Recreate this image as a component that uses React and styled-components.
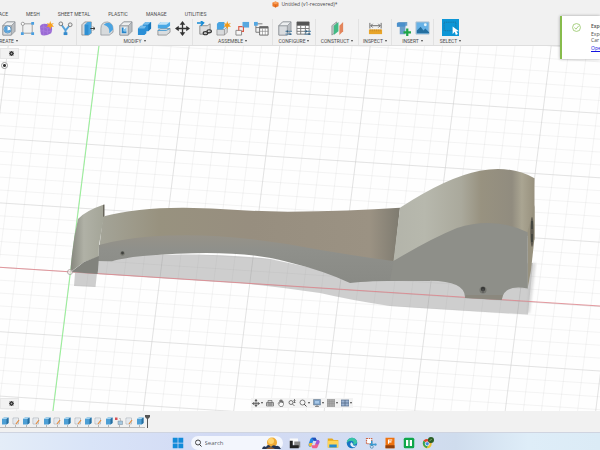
import React from 'react';
import styled, { createGlobalStyle } from 'styled-components';

const GlobalStyle = createGlobalStyle`
  * { box-sizing: border-box; }
  html, body, #root { height: 100%; margin: 0; }
  body { overflow: hidden; font-family: Roboto, "Liberation Sans", sans-serif; font-size: 5px; line-height: 6px; color: #4c4c4c; }
  button, input { font: inherit; color: inherit; }
  svg { display: block; }
`;

const Screen = styled.div`
  position: relative;
  display: flex;
  flex-direction: column;
  height: 100vh;
  background: #f1f1f1;
  overflow: hidden;
`;
const TitleBar = styled.header`
  display: flex;
  justify-content: center;
  align-items: center;
  gap: 2px;
  height: 8px;
  flex: none;
  padding-left: 10px;
  font-size: 5px;
  svg { width: 7px; height: 7px; }
`;
const Title = styled.h1`
  margin: 0;
  font: 5px/7px "Open Sans", sans-serif;
  color: #444;
`;
const PlainButton = styled.button`
  display: flex;
  align-items: center;
  justify-content: center;
  padding: 0;
  border: 0;
  background: none;
  white-space: nowrap;
`;
const Tabs = styled.nav`
  display: flex;
  gap: 18px;
  height: 11px;
  flex: none;
  margin-left: -13px;
`;
const Ribbon = styled.div`
  display: flex;
  height: 27px;
  flex: none;
  margin-left: -62px;
  border-bottom: 1px solid #dedede;
`;
const Group = styled.section`
  flex: none;
  width: ${p => p.$width}px;
  padding: 0 3px;
  & + & { border-left: 1px solid #e2e2e2; }
`;
const Tools = styled.div`
  display: flex;
  justify-content: ${p => (p.$end ? 'flex-end' : 'center')};
  gap: 4px;
  height: 18px;
`;
const Tool = styled(PlainButton)`
  width: ${p => (p.$active ? 17 : 15)}px;
  height: ${p => (p.$active ? 17 : 18)}px;
  background: ${p => (p.$active ? '#0d96d6' : 'none')};
  svg { width: ${p => (p.$active ? 17 : 15)}px; height: ${p => (p.$active ? 17 : 15)}px; }
`;
const GroupLabel = styled(PlainButton)`
  width: 100%;
  height: 7px;
  gap: 2px;
`;
const Caret = styled.i`
  border: 1px solid transparent;
  border-top: 2px solid #444;
  border-bottom: 0;
`;
const Viewport = styled.main`
  position: relative;
  flex: 1;
  min-height: 0;
  background: #fefefe;
  overflow: hidden;
`;
const Scene = styled.svg`
  width: 100%;
  height: 100%;
`;
const SidePanel = styled.div`
  position: absolute;
  left: 0;
  ${p => (p.$bottom ? 'bottom: 2px;' : 'top: 2px;')}
  display: flex;
  align-items: center;
  justify-content: flex-end;
  width: 19px;
  height: 11px;
  padding-right: 4px;
  background: #f2f2f2;
  border: 1px solid #e7e7e7;
  svg { width: 5px; height: 5px; }
`;
const RootNode = styled.label`
  position: absolute;
  top: 16px;
  left: 1px;
  display: flex;
`;
const Radio = styled.input`
  appearance: none;
  width: 7px;
  height: 7px;
  margin: 0;
  border: 1px solid #9a9a9a;
  border-radius: 50%;
  background: radial-gradient(#333 0 1px, #fff 2px);
`;
const NavBar = styled.div`
  position: absolute;
  bottom: 3px;
  left: 0;
  right: 0;
  display: flex;
  justify-content: center;
  padding-left: 4px;
`;
const NavTools = styled.div`
  display: flex;
  align-items: center;
  gap: 3px;
  height: 10px;
  padding: 0 1px;
  background: #f3f3f3;
`;
const NavTool = styled(PlainButton)`
  gap: 1px;
  height: 10px;
  svg { width: 8px; height: 8px; }
`;
const Timeline = styled.footer`
  display: flex;
  flex: none;
  height: 21px;
  padding-top: 4px;
`;
const Track = styled.div`
  display: flex;
  height: 13px;
  border-bottom: 1px solid #b8b8b8;
`;
const Feature = styled(PlainButton)`
  position: relative;
  width: ${p => (p.$wide ? 11 : 10)}px;
  height: 12px;
  svg { width: 8px; height: 8px; }
  &::after { content: ''; position: absolute; bottom: 0; left: 5px; width: 1px; height: 2px; background: #b8b8b8; }
`;
const Marker = styled.svg`
  width: 6px;
  height: 13px;
`;
const Taskbar = styled.nav`
  display: flex;
  align-items: center;
  justify-content: center;
  gap: 6px;
  flex: none;
  height: 18px;
  padding-top: 3px;
  padding-left: 6px;
  border-top: 1px solid #cfd4e0;
  background: linear-gradient(90deg, #e4edf8 0, #d9e4f8 15%, #d2daf4 35%, #d3ddf2 65%, #cfdced 76%, #deedf8 88%, #dbebf6);
`;
const SearchBox = styled.label`
  display: flex;
  align-items: center;
  gap: 3px;
  width: 92px;
  height: 14px;
  padding: 0 2px 0 4px;
  border-radius: 7px;
  background: #f3f6fd;
  svg { flex: none; }
`;
const SearchInput = styled.input`
  flex: 1;
  min-width: 0;
  padding: 0;
  border: 0;
  background: none;
  outline: none;
  font: 6px/8px "Open Sans", sans-serif;
  &::placeholder { color: #5b5f68; opacity: 1; }
`;
const AppButton = styled(PlainButton)`
  width: 13px;
  height: 14px;
  svg { width: 12px; height: 12px; }
`;
const Toast = styled.aside`
  position: absolute;
  top: 16px;
  right: 0;
  display: flex;
  gap: 10px;
  width: 40px;
  height: 43px;
  padding: 7px 0 0 10px;
  border-left: 2px solid #87bc4c;
  background: #fff;
  box-shadow: 0 0 3px #0005;
  overflow: hidden;
  white-space: nowrap;
  svg { flex: none; width: 9px; height: 9px; }
`;
const ToastText = styled.div`
  font: 5px/6px "Open Sans", sans-serif;
  strong, a, p { display: block; margin: 0; font-weight: 400; }
  strong { margin-bottom: 2px; font-weight: 600; }
  a { margin-top: 2px; color: #1414e0; }
`;

const Icon = ({ children, box = 16 }) => <svg viewBox={`0 0 ${box} ${box}`} aria-hidden="true">{children}</svg>;

const Shell = ({ front = '#d9dcdf' }) => (
  <g stroke="#858a8f" strokeWidth=".7">
    <path d="M2 5 6 1H15V11L11 15H2Z" fill="#b9bdc1" />
    <path d="M2 5H11V15H2Z" fill={front} />
    <path d="M2 5 6 1H15L11 5Z" fill="#eceeef" />
  </g>
);

const icons = {
  hole: <Icon><Shell /><circle cx="7" cy="9" r="3.8" fill="#fff" stroke="#5a8eb6" /><path d="M7 5.5A3.5 3.5 0 1 0 10.5 9L7 10Z" fill="#58a3dc" /></Icon>,
  sketch: <Icon><path d="M3 4V14M4 3H14M4 13H14M13 4V12" stroke="#9c9c9c" /><g fill="#4b9fe0"><path d="M12 1h3v3h-3zM12 12h3v3h-3zM1 12h3v3H1z" /></g><circle cx="3" cy="3" r="1.7" fill="#fff" stroke="#888" strokeWidth=".8" /></Icon>,
  form: <Icon><path d="M1 6Q2 3 6 3L13 4Q15 9 13 13L9 15Q3 16 2 14Z" fill="#9a6bd4" /><path d="M1 7Q6 5 9 8V15M9 8L14 6M1 11Q5 9 9 12L14 10M5 3V15" stroke="#b184e2" strokeWidth=".6" fill="none" /><path d="m12 0 1 3 3-1-2 2 2 2-3 0-1 3-1-3-3 0 2-2-2-2 3 1z" fill="#f8a11c" /></Icon>,
  branch: <Icon><path d="M3 3 8 10 13 4M8 10V14" stroke="#55a2da" strokeWidth="2" fill="none" /><g fill="#eee" stroke="#777"><circle cx="3" cy="3" r="2" /><circle cx="13" cy="4" r="2" /></g><path d="M6 12h4v3H6z" fill="#3489cb" /></Icon>,
  press: <Icon><path d="M2 4 5 1H12V13L9 15H2Z" fill="#d6d9dc" stroke="#777" strokeWidth=".7" /><path d="M5 4 8 1H12V13L9 15H5Z" fill="#48a4e1" /><path d="M5 4H9V15H5Z" fill="#2f8fd2" /><path d="M11 8h5m-2-2 2 2-2 2" stroke="#333" fill="none" /></Icon>,
  fillet: <Icon><path d="M2 15V8Q2 1 9 1 15 2 15 9V12L11 15Z" fill="#d7dadc" stroke="#858a8f" strokeWidth=".7" /><path d="M5 4Q8 1 11 2 15 3 15 9L11 13Q12 6 5 4" fill="#4aa4e2" /></Icon>,
  shell: <Icon><Shell /><path d="M4 7H9V13H4Z" fill="#fff" /><path d="M4 7H6V11H9V13H4Z" fill="#2685ca" /><path d="M6 9 9 7V11H6Z" fill="#85c5ed" /></Icon>,
  combine: <Icon><path d="M1 8 4 5H6V4L9 1H15V8L12 11H10V13L8 15H1Z" fill="#2b8fd6" /><path d="M1 8 4 5H10L8 8ZM6 4 9 1H15L12 4Z" fill="#75bbea" /><path d="M12 4 15 1V8L12 11Z" fill="#1976b9" /></Icon>,
  offset: <Icon><path d="M2 10 5 8H15V12L11 15H2Z" fill="#dadddf" stroke="#777" strokeWidth=".7" /><path d="M2 4 5 1H15V5L11 8H2Z" fill="#49a8e5" /><path d="M2 4H11L15 1H5Z" fill="#c1e3f7" /><path d="M2 10H11L15 8" stroke="#4099d1" fill="none" /></Icon>,
  move: <Icon><path d="M8 2V14M2 8H14" stroke="#333" strokeWidth="1.4" /><path d="m8 0 3 4H5zM8 16l3-4H5zM0 8l4-3v6zM16 8l-4-3v6z" fill="#333" /></Icon>,
  insertLink: <Icon><path d="M3 5H11L14 3V12L10 14H3Z" fill="#dedede" stroke="#777" strokeWidth=".8" /><path d="M0 2H6M4 0 7 2 4 5" stroke="#168bd5" strokeWidth="1.6" fill="none" /><g fill="none" stroke="#333" strokeWidth="1.2"><ellipse cx="9" cy="13" rx="2.4" ry="1.7" /><ellipse cx="13" cy="11" rx="2.4" ry="1.7" /></g></Icon>,
  component: <Icon><path d="M1 9h8v6H1zM9 9l3-3v6l-3 3" fill="#d8dadc" stroke="#858585" strokeWidth=".7" /><path d="M1 3 3 1H9V7L7 9H1Z" fill="#4aa4e1" /><path d="m12 0 1 3 3-1-2 2 2 2-3 0-1 3-1-3-3 0 2-2-2-2 3 1z" fill="#f39a18" /></Icon>,
  joint: <Icon><path d="M8 1H15V7H8Z" fill="#58a8df" /><path d="M1 10H7V15H1Z" fill="#f5f5f5" stroke="#888" /><path d="M4 10V6H8M7 11H9V6" stroke="#db5945" strokeWidth="1.2" fill="none" /></Icon>,
  bom: <Icon><path d="M2 3V12H7M2 7H6M1 3H9" stroke="#777" fill="none" /><path d="M0 1h4v4H0z" fill="#54a7e2" /><path d="M6 6H15V15H6Z" fill="#fff" stroke="#666" /><path d="M6 6H15V8H6Z" fill="#666" /><path d="M6 11H15M9 8V15M12 8V15" stroke="#888" strokeWidth=".7" /></Icon>,
  configure: <Icon><Shell /><path d="M9 11H16M9 14H16" stroke="#4d82a9" fill="none" /><path d="M11 10v2M14 13v2" stroke="#2d5a7c" strokeWidth="1.4" /></Icon>,
  table: <Icon><path d="M1 1H14V14H1Z" fill="#fff" stroke="#777" /><path d="M1 1H14V5H1Z" fill="#555" /><path d="M1 8H14M1 11H14M5 5V14M10 5V14" stroke="#777" /><path d="M9 11H16M9 14H16" stroke="#4d82a9" /><path d="M11 10v2M14 13v2" stroke="#2d5a7c" strokeWidth="1.4" /></Icon>,
  planes: <Icon><path d="M2 5 7 1V11L2 15Z" fill="#c5c8ca" stroke="#7e8385" strokeWidth=".7" /><path d="M4 5 9 1V11L4 15Z" fill="#41b984" /><path d="M10 5 14 1V11L10 15Z" fill="#e3855c" /></Icon>,
  measure: <Icon><path d="M2 2V8M14 2V8M3 5H13M5 3 3 5 5 7M11 3 13 5 11 7" stroke="#666" fill="none" /><path d="M1 9H15V14H1Z" fill="#e8a52a" /><path d="M3 9v2m2-2v2m2-2v2m2-2v2m2-2v2m2-2v2" stroke="#c18324" strokeWidth=".7" /></Icon>,
  insert: <Icon><path d="M1 2 3 1H12V5H10V14H4V6H1Z" fill="#6b9fca" /><path d="M1 2H10V6H1Z" fill="#4b90cc" /><path d="M12 8V16M8 12H16" stroke="#20a548" strokeWidth="2.4" /></Icon>,
  picture: <Icon><path d="M1 1H15V14H1Z" fill="#68b2e6" stroke="#b7c4cf" /><path d="M2 13V10L6 6 9 10 11 8 15 12V13Z" fill="#246f9f" /><circle cx="11" cy="4" r="1.5" fill="#e7f5fb" /></Icon>,
  select: <Icon><path d="M2 3H13V11H2Z" fill="none" stroke="#236487" strokeWidth=".7" strokeDasharray="1 1" /><path d="M10 7V14L12 12 13 15 15 14 13.500 11.500H16Z" fill="#fff" /></Icon>,
};

const Gear = () => <Icon><circle cx="8" cy="8" r="5" fill="none" stroke="#2e2e2e" strokeWidth="4" /><path d="M8 0v16M0 8h16M2 2l12 12M14 2 2 14" stroke="#2e2e2e" strokeWidth="2" /><circle cx="8" cy="8" r="2" fill="#bbb" /></Icon>;

const groups = [
  { label: 'CREATE', width: 138, end: true, tools: ['hole', 'sketch', 'form', 'branch'] },
  { label: 'MODIFY', width: 116, tools: ['press', 'fillet', 'shell', 'combine', 'offset', 'move'] },
  { label: 'ASSEMBLE', width: 80, tools: ['insertLink', 'component', 'joint', 'bom'] },
  { label: 'CONFIGURE', width: 43, tools: ['configure', 'table'] },
  { label: 'CONSTRUCT', width: 43, tools: ['planes'] },
  { label: 'INSPECT', width: 33, tools: ['measure'] },
  { label: 'INSERT', width: 42, tools: ['insert', 'picture'] },
  { label: 'SELECT', width: 34, tools: ['select'], active: true },
];
const tabs = ['SURFACE', 'MESH', 'SHEET METAL', 'PLASTIC', 'MANAGE', 'UTILITIES'];

const navTools = [
  ['Orbit', true, <Icon><path d="M8 1V15M1 9H15" stroke="#555" strokeWidth="1.5" /><path d="m8 0 3 4H5zM8 16l3-4H5zM0 9l4-3v6zM16 9l-4-3v6z" fill="#555" /><ellipse cx="8" cy="9" rx="5" ry="3" fill="none" stroke="#777" /></Icon>],
  ['Look at', false, <Icon><path d="M1 7H15V14H1ZM4 7V3H12V7M1 10H15M6 7v7m4-7v7" fill="#ddd" stroke="#666" strokeWidth="1.4" /></Icon>],
  ['Pan', false, <Icon><path d="M5 14 2 8Q3 6 5 9V3Q6 1 7 3V7 2Q8 0 9 2V7 3Q11 1 11 4V8 5Q13 4 13 7V11L11 15H6Z" fill="#fafafa" stroke="#555" strokeWidth="1.2" /></Icon>],
  ['Zoom', false, <Icon><circle cx="6" cy="7" r="4" fill="none" stroke="#555" strokeWidth="1.6" /><path d="m9 10 4 4M13 1v7m-2-5 2-2 2 2m-4 3 2 2 2-2" stroke="#555" strokeWidth="1.5" fill="none" /></Icon>],
  ['Fit', true, <Icon><circle cx="7" cy="7" r="5" fill="#f7f7f7" stroke="#555" strokeWidth="1.5" /><path d="m10 10 5 5" stroke="#555" strokeWidth="2" /></Icon>],
  ['Display settings', true, <Icon><path d="M1 1H15V12H1Z" fill="#7b9fc4" stroke="#5d6c7e" /><path d="M4 4H12V9H4Z" fill="#a8c8e8" /><path d="M8 12v3m-4 0h8" stroke="#666" strokeWidth="1.4" /></Icon>],
  ['Grid settings', true, <Icon><path d="M0 1H16V15H0Z" fill="#aaa" stroke="#858585" /><path d="M0 5h16M0 9h16M5 1v14m5-14v14" stroke="#949494" /></Icon>],
  ['Viewports', true, <Icon><path d="M0 2H16V14H0Z" fill="#9cb3d1" stroke="#526886" strokeWidth="1.4" /><path d="M8 2V14M0 8H16" stroke="#526886" strokeWidth="1.5" /></Icon>],
];

const Extrude = () => <Icon><path d="M2 4 6 1H15V12L11 15H2Z" fill="#4d9fd5" /><path d="M2 4 6 1H15L11 4Z" fill="#a9d3ed" /><path d="M11 4 15 1V12L11 15Z" fill="#286e9e" /></Icon>;
const SketchMark = () => <Icon><path d="M2 2H13V14H2Z" fill="#f6f6f6" stroke="#aab3bb" strokeWidth="1.4" /><path d="M4 6h7M4 10h6" stroke="#aac3d9" /><path d="m8 14 6-8" stroke="#e58c40" strokeWidth="2.4" /></Icon>;
const Break = () => <Icon><path d="M0 1h5v5H0z" fill="#d64f55" /><path d="M6 8H15V15H6Z" fill="#a5c8e0" stroke="#75899a" /><path d="M8 3h3v5" stroke="#999" fill="none" /></Icon>;
const features = ['e', 's', 'e', 's', 'e', 's', 'e', 's', 'e', 's', 'e', 'b', 's', 'e'];
const featureInfo = { e: ['Extrude', Extrude], s: ['Sketch', SketchMark], b: ['Break link', Break] };

const apps = [
  ['Task view', <Icon><path d="M1 2H12V10H1Z" fill="#fafafa" /><path d="M7 6H15V14H7Z" fill="#8a8a8a" /><path d="M1 5H5V11H13V15H1Z" fill="#222" /></Icon>],
  ['Copilot', <Icon><path d="M5 1H10L12 5H7L4 13H2Q0 12 1 9L3 3Q4 1 5 1" fill="#258ae0" /><path d="M5 1H10L12 5H8Z" fill="#274db8" /><path d="M11 15H6L4 11H9L12 4H14Q16 5 15 8L13 13Q12 15 11 15" fill="#ed6090" /><path d="M2 8 6 8 4 13Q1 13 1 10" fill="#f1bd37" /><path d="M12 4H14Q16 5 15 8L13 10 10 9Z" fill="#9b57da" /></Icon>],
  ['File Explorer', <Icon><path d="M1 2H7L9 4H15V14H1Z" fill="#e6a91c" /><path d="M1 5H15V14H1Z" fill="#ffd455" /><path d="M3 10H13V14H3Z" fill="#248bd0" /></Icon>],
  ['Edge', <Icon><circle cx="8" cy="8" r="7" fill="#1873c4" /><path d="M1 7C2-1 14-1 15 7Q14 11 9 10 12 6 7 5 3 5 1 8" fill="#39c4a5" /><path d="M7 7Q4 10 8 13 12 15 14 11 9 13 9 9 8 7 7 7" fill="#e1f1f7" /></Icon>],
  ['Snipping Tool', <Icon><path d="M2 2H9V9H2Z" fill="#fff" stroke="#cb6547" strokeWidth="1.6" strokeDasharray="2 1" /><path d="M9 5V12M6 10H15" stroke="#369bd2" strokeWidth="2" /><circle cx="9" cy="13" r="2" fill="none" stroke="#4589b0" /><circle cx="14" cy="10" r="1.5" fill="#4798cf" /></Icon>],
  ['Fusion', <Icon><path d="M2 1H14V15H2Z" fill="#ee7210" /><path d="M2 11H14V15H2Z" fill="#92400c" /><path d="M6 9V4H11M6 6.500H10" stroke="#fff" strokeWidth="1.5" fill="none" /></Icon>],
  ['Green app', <Icon><rect x="1" y="1" width="14" height="14" rx="2" fill="#0ea64a" /><path d="M4 4H7V12H4ZM9 4H12V12H9Z" fill="#fff" /></Icon>],
  ['Chrome', <Icon><circle cx="7" cy="9" r="6" fill="#eac735" /><path d="M7 9 2 5Q5 1 10 4L13 8Z" fill="#df4335" /><path d="M7 9 2 5Q-1 11 6 15L9 10Z" fill="#32a155" /><circle cx="7" cy="9" r="2.700" fill="#418be0" stroke="#fff" /><circle cx="12" cy="4" r="4" fill="#295f25" /><path d="m10 5 3-2" stroke="#a2c38e" /></Icon>],
];

const GridLines = () => (
  <g fill="none" stroke="#cfcfcf" strokeWidth=".7">
    {Array.from({ length: 60 }, (_, n) => {
      const k = n - 10, x = 98.7 + k * 18.1;
      return <path key={`v${k}`} d={`M${x} 46 L${x - 46} 411`} opacity={k % 5 ? 0.32 : 0.85} />;
    })}
    {Array.from({ length: 60 }, (_, n) => {
      const k = n - 35, y = 267.3 + k * 12.88;
      return <path key={`h${k}`} d={`M0 ${y} L1200 ${y + 78.600}`} opacity={k % 5 ? 0.32 : 0.85} />;
    })}
  </g>
);

const Model = () => (
  <Scene viewBox="0 46 600 365" preserveAspectRatio="xMinYMin slice" role="img" aria-label="Model">
    <defs>
      <linearGradient id="head"><stop offset="0" stopColor="#b3b4aa" /><stop offset=".22" stopColor="#b7b8ad" /><stop offset=".48" stopColor="#aaa99c" /><stop offset=".62" stopColor="#989280" /><stop offset=".84" stopColor="#918c7f" /><stop offset=".91" stopColor="#aaa592" /><stop offset="1" stopColor="#98917e" /></linearGradient>
      <linearGradient id="arm"><stop offset="0" stopColor="#a4a498" /><stop offset=".2" stopColor="#98927f" /><stop offset=".5" stopColor="#978e7f" /><stop offset=".9" stopColor="#9b9283" /><stop offset="1" stopColor="#7e7b70" /></linearGradient>
      <linearGradient id="cap"><stop offset="0" stopColor="#85867d" /><stop offset=".4" stopColor="#b0b1a6" /><stop offset="1" stopColor="#a4a598" /></linearGradient>
      <linearGradient id="under" x1="0" y1="0" x2="0" y2="1"><stop offset="0" stopColor="#969288" /><stop offset=".3" stopColor="#8f908b" /><stop offset="1" stopColor="#898a85" /></linearGradient>
      <filter id="soft"><feGaussianBlur stdDeviation="1" /></filter>
    </defs>
    <GridLines />
    <path d="M99 46 53 411" stroke="#8df08d" strokeWidth=".9" />
    <path d="M75 273H97L95.500 287 74 286ZM98 256L150 255Q220 253 270 259L350 276 533 263 528 314.500 420 308 390 306Q350 300 320 293 280 287 240 283L98 274Z" fill="#8c8c8c" opacity=".42" />
    <path d="M530 263H536L530 313H527Z" fill="#bbb" opacity=".5" filter="url(#soft)" />
    <path d="M0 267.300 1200 344.700" stroke="#df8189" strokeWidth=".8" />
    <path d="M103 216.500Q137 207.500 184 207.700C220 208 245 211.500 288 211.700Q350 211 400 207.700L394 262 340 258 250 247 99 250Z" fill="url(#arm)" />
    <path d="M99 245Q120 239 150 236.500 200 233 250 239L287 244Q340 254 393 261L430 240V281Q375 280 350 283 325 271 287 261.700C245 251 195 251 133 257Q115 260 112 261.300L98 261Z" fill="url(#under)" />
    <path d="M400 207.700Q447 177 480 170.700 511 165 534.500 178.300V240L528 236 505 230 450 240 393.500 261Z" fill="url(#head)" />
    <path d="M527.500 232 534.500 205V238L531 270 527.500 289Z" fill="#98927f" />
    <ellipse cx="532" cy="232" rx="1.700" ry="15" fill="#5e5a50" /><path d="M532 221V246" stroke="#28302f" strokeWidth="1" strokeDasharray="8 5" />
    <path d="M393.500 261Q430 239 457 228 494 216 527.700 232.300V288.500Q504 284 501.700 300L465 298Q466 281 430 280.700H390Z" fill="#8e8f89" />
    <path d="m465 298 1-3h37l-1.300 5Z" fill="#878273" opacity=".5" />
    <path d="M70.500 272Q72 244 78 219 85 211 104 204.500V216L99 245 98.500 257 84 262Z" fill="url(#cap)" />
    <path d="M103 205 104.500 204.500V216L103 217Z" fill="#69665c" />
    <path d="M71 272 84 262 99 256 97.700 274Z" fill="#82837d" />
    <circle cx="122.500" cy="253.500" r="2.300" fill="#77786f" /><circle cx="122.500" cy="253" r="1.400" fill="#41423f" />
    <circle cx="483" cy="290" r="3.500" fill="#74756f" /><circle cx="483" cy="289" r="2.200" fill="#393a38" /><path d="M483 289v4" stroke="#555" />
    <circle cx="70" cy="272" r="2.500" fill="#fff8" stroke="#9b9191" strokeWidth=".7" />
  </Scene>
);

export default function App() {
  return (
    <Screen>
      <GlobalStyle />
      <TitleBar>
        <Icon><path d="m8 1 7 3v8l-7 3-7-3V4z" fill="#eb7627" /><path d="m1 4 7 4 7-4-7-3z" fill="#f8a05c" /><path d="M8 8v7" stroke="#bd4d12" /></Icon>
        <Title>Untitled (v1-recovered)*</Title>
      </TitleBar>
      <Tabs>{tabs.map(t => <PlainButton key={t}>{t}</PlainButton>)}</Tabs>
      <Ribbon>
        {groups.map(g => (
          <Group key={g.label} $width={g.width}>
            <Tools $end={g.end}>{g.tools.map(t => <Tool key={t} $active={g.active} aria-label={t}>{icons[t]}</Tool>)}</Tools>
            <GroupLabel>{g.label}<Caret /></GroupLabel>
          </Group>
        ))}
      </Ribbon>
      <Viewport>
        <Model />
        <SidePanel><PlainButton aria-label="Browser options"><Gear /></PlainButton></SidePanel>
        <RootNode><Radio type="radio" name="root" defaultChecked aria-label="Activate component" /></RootNode>
        <SidePanel $bottom><PlainButton aria-label="Comment options"><Gear /></PlainButton></SidePanel>
        <NavBar>
          <NavTools>{navTools.map(([name, menu, icon]) => <NavTool key={name} aria-label={name}>{icon}{menu && <Caret />}</NavTool>)}</NavTools>
        </NavBar>
      </Viewport>
      <Timeline>
        <Track>
          {features.map((f, i) => {
            const [name, Mark] = featureInfo[f];
            return <Feature key={i} $wide={i % 3 === 1} aria-label={name}><Mark /></Feature>;
          })}
        </Track>
        <Marker viewBox="0 0 6 13" aria-hidden="true"><path d="M0 0H5V2L3 4V13H2V4L0 2Z" fill="#555" /></Marker>
      </Timeline>
      <Taskbar>
        <AppButton aria-label="Start"><Icon><path d="M1 1H7.500V7.500H1ZM8.500 1H15V7.500H8.500ZM1 8.500H7.500V15H1ZM8.500 8.500H15V15H8.500Z" fill="#128bd9" /></Icon></AppButton>
        <SearchBox>
          <svg width="7" height="8" viewBox="0 0 14 16" aria-hidden="true"><circle cx="6" cy="7" r="5" fill="none" stroke="#333" strokeWidth="1.800" /><path d="m9 11 4 4" stroke="#333" strokeWidth="2" /></svg>
          <SearchInput placeholder="Search" aria-label="Search" />
          <svg width="19" height="13" viewBox="0 0 19 13" aria-hidden="true"><circle cx="10" cy="5.500" r="5" fill="#efaa35" /><circle cx="9" cy="4" r="3" fill="#ffd46e" /><path d="M0 12Q1 8 4 10 6 6 9 10 11 7 14 9 17 8 19 12Z" fill="#253553" /><path d="M4 12Q8 8 13 12" fill="#91603c" /></svg>
        </SearchBox>
        {apps.map(([name, icon]) => <AppButton key={name} aria-label={name}>{icon}</AppButton>)}
      </Taskbar>
      <Toast role="status">
        <Icon><circle cx="8" cy="8" r="7" fill="none" stroke="#92c462" strokeWidth="1.400" /><path d="m4.500 8 2.500 3 5-6" fill="none" stroke="#92c462" strokeWidth="1.400" /></Icon>
        <ToastText><strong>Expo</strong><p>Expo</p><p>Car</p><a href="#open">Open</a></ToastText>
      </Toast>
    </Screen>
  );
}
